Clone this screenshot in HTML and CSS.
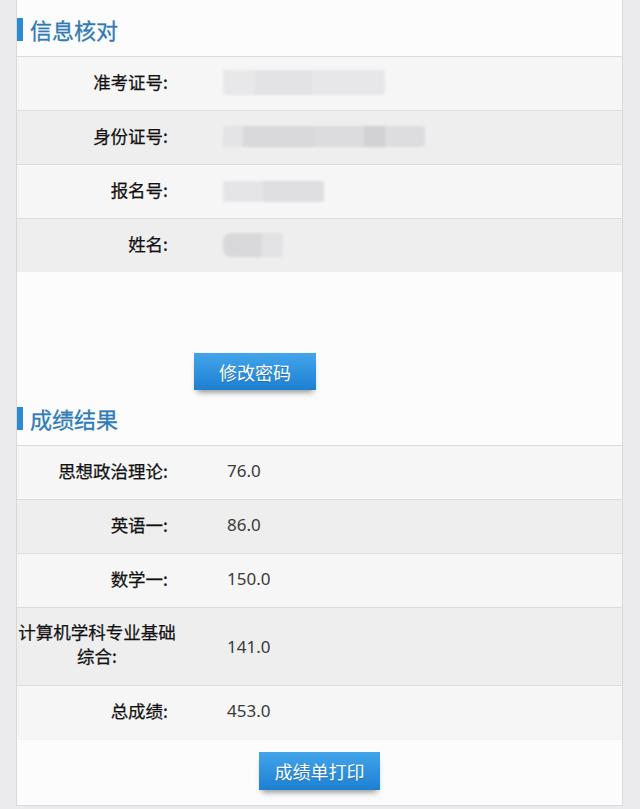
FILE: index.html
```html
<!DOCTYPE html>
<html lang="zh-CN">
<head>
    <meta charset="UTF-8">
    <meta name="viewport" content="width=device-width, initial-scale=1.0">
    <title>成绩查询</title>
    <link rel="stylesheet" href="styles.css">
</head>
<body>

    <div class="panel">

        <!-- 信息核对 -->
        <h2 class="sec-title">信息核对</h2>
        <div class="table">
            <div class="row light">
                <div class="label">准考证号:</div>
                <div class="value"><span class="blur blur-1"></span></div>
            </div>
            <div class="row dark">
                <div class="label">身份证号:</div>
                <div class="value"><span class="blur blur-2"></span></div>
            </div>
            <div class="row light">
                <div class="label">报名号:</div>
                <div class="value"><span class="blur blur-3"></span></div>
            </div>
            <div class="row dark">
                <div class="label">姓名:</div>
                <div class="value"><span class="blur blur-4"></span></div>
            </div>
        </div>

        <div class="actions actions-pwd">
            <button class="btn">修改密码</button>
        </div>

        <!-- 成绩结果 -->
        <h2 class="sec-title">成绩结果</h2>
        <div class="table scores">
            <div class="row light">
                <div class="label">思想政治理论:</div>
                <div class="value">76.0</div>
            </div>
            <div class="row dark">
                <div class="label">英语一:</div>
                <div class="value">86.0</div>
            </div>
            <div class="row light">
                <div class="label">数学一:</div>
                <div class="value">150.0</div>
            </div>
            <div class="row dark tall">
                <div class="label label-long">计算机学科专业基础综合:</div>
                <div class="value">141.0</div>
            </div>
            <div class="row light">
                <div class="label">总成绩:</div>
                <div class="value">453.0</div>
            </div>
        </div>

        <div class="actions actions-print">
            <button class="btn">成绩单打印</button>
        </div>

    </div>

</body>
</html>
```

FILE: styles.css
```css
* { margin: 0; padding: 0; box-sizing: border-box; }
body {
    background: #ebebed;
    font-family: "Noto Sans CJK SC", "Noto Sans", sans-serif;
    height: 809px;
    overflow: hidden;
}
.panel {
    margin: 0 17px 0 16px;
    background: #fcfcfd;
    border: 1px solid #d9d9dc;
    border-top: none;
}

/* section headings */
.sec-title {
    height: 56px;
    padding-top: 18px;
    display: flex;
    align-items: flex-start;
    font-size: 22px;
    font-weight: 400;
    line-height: 23px;
    color: #2f7bb6;
    -webkit-text-stroke: 0.3px #2f7bb6;
}
.sec-title::before {
    content: "";
    width: 6px;
    height: 23px;
    margin-right: 7px;
    background: #2b8ad0;
}

/* rows */
.row {
    display: grid;
    grid-template-columns: 160px 1fr;
    align-items: center;
    height: 54px;
    padding-bottom: 5px;
    border-top: 1px solid #dcdcde;
}
.row.light { background: #f6f6f7; }
.row.dark { background: #eeeeef; }
.row.tall { height: 78px; padding-bottom: 0; }
.label {
    text-align: right;
    padding-right: 9px;
    font-size: 17.5px;
    font-weight: 400;
    color: #111;
    -webkit-text-stroke: 0.25px #111;
}
.label-long {
    text-align: center;
    padding: 0;
    line-height: 24px;
    margin-top: -6px;
}
.value {
    padding-left: 46px;
    font-size: 17px;
    color: #333;
}
.scores .value {
    padding-left: 50px;
    font-family: "Noto Sans", "Open Sans", sans-serif;
    font-size: 17px;
    color: #3a3a3a;
}

/* blurred personal data */
.blur {
    display: block;
    filter: blur(1.2px);
    border-radius: 3px;
}
.blur-1 {
    width: 162px;
    height: 25px;
    margin-top: 2px;
    background: linear-gradient(90deg, #e8e8ea 0 20%, #e3e3e5 20% 55%, #e7e7e9 55% 100%);
}
.blur-2 {
    width: 202px;
    height: 21px;
    margin-top: 3px;
    background: linear-gradient(90deg, #e4e4e6 0 10%, #d9d9db 10% 45%, #dcdcde 45% 70%, #d2d2d4 70% 80%, #dddddf 80% 100%);
}
.blur-3 {
    width: 101px;
    height: 21px;
    margin-top: 5px;
    background: linear-gradient(90deg, #e5e5e7 0 40%, #dfdfe1 40% 100%);
}
.blur-4 {
    width: 60px;
    height: 24px;
    margin-top: 4px;
    border-radius: 8px 3px 3px 8px;
    background: linear-gradient(90deg, #d9d9db 0 65%, #e3e3e5 65% 100%);
}

/* buttons */
.actions-pwd {
    padding: 81px 0 0 177px;
    height: 117px;
}
.actions-print {
    border-top: 1px solid #f3f3f4;
    padding: 12px 0 15px;
    text-align: center;
}
.btn {
    width: 122px;
    height: 37px;
    border: none;
    background: linear-gradient(#42a5ea, #1d7fd2);
    color: #fff;
    font-family: "Noto Sans CJK SC", sans-serif;
    font-size: 18px;
    text-shadow: 0 1px 1px rgba(0, 0, 0, 0.2);
    box-shadow: 0 5px 6px -3px rgba(0, 0, 0, 0.45);
    cursor: pointer;
}
.actions-print .btn {
    height: 38px;
    width: 121px;
}
```
